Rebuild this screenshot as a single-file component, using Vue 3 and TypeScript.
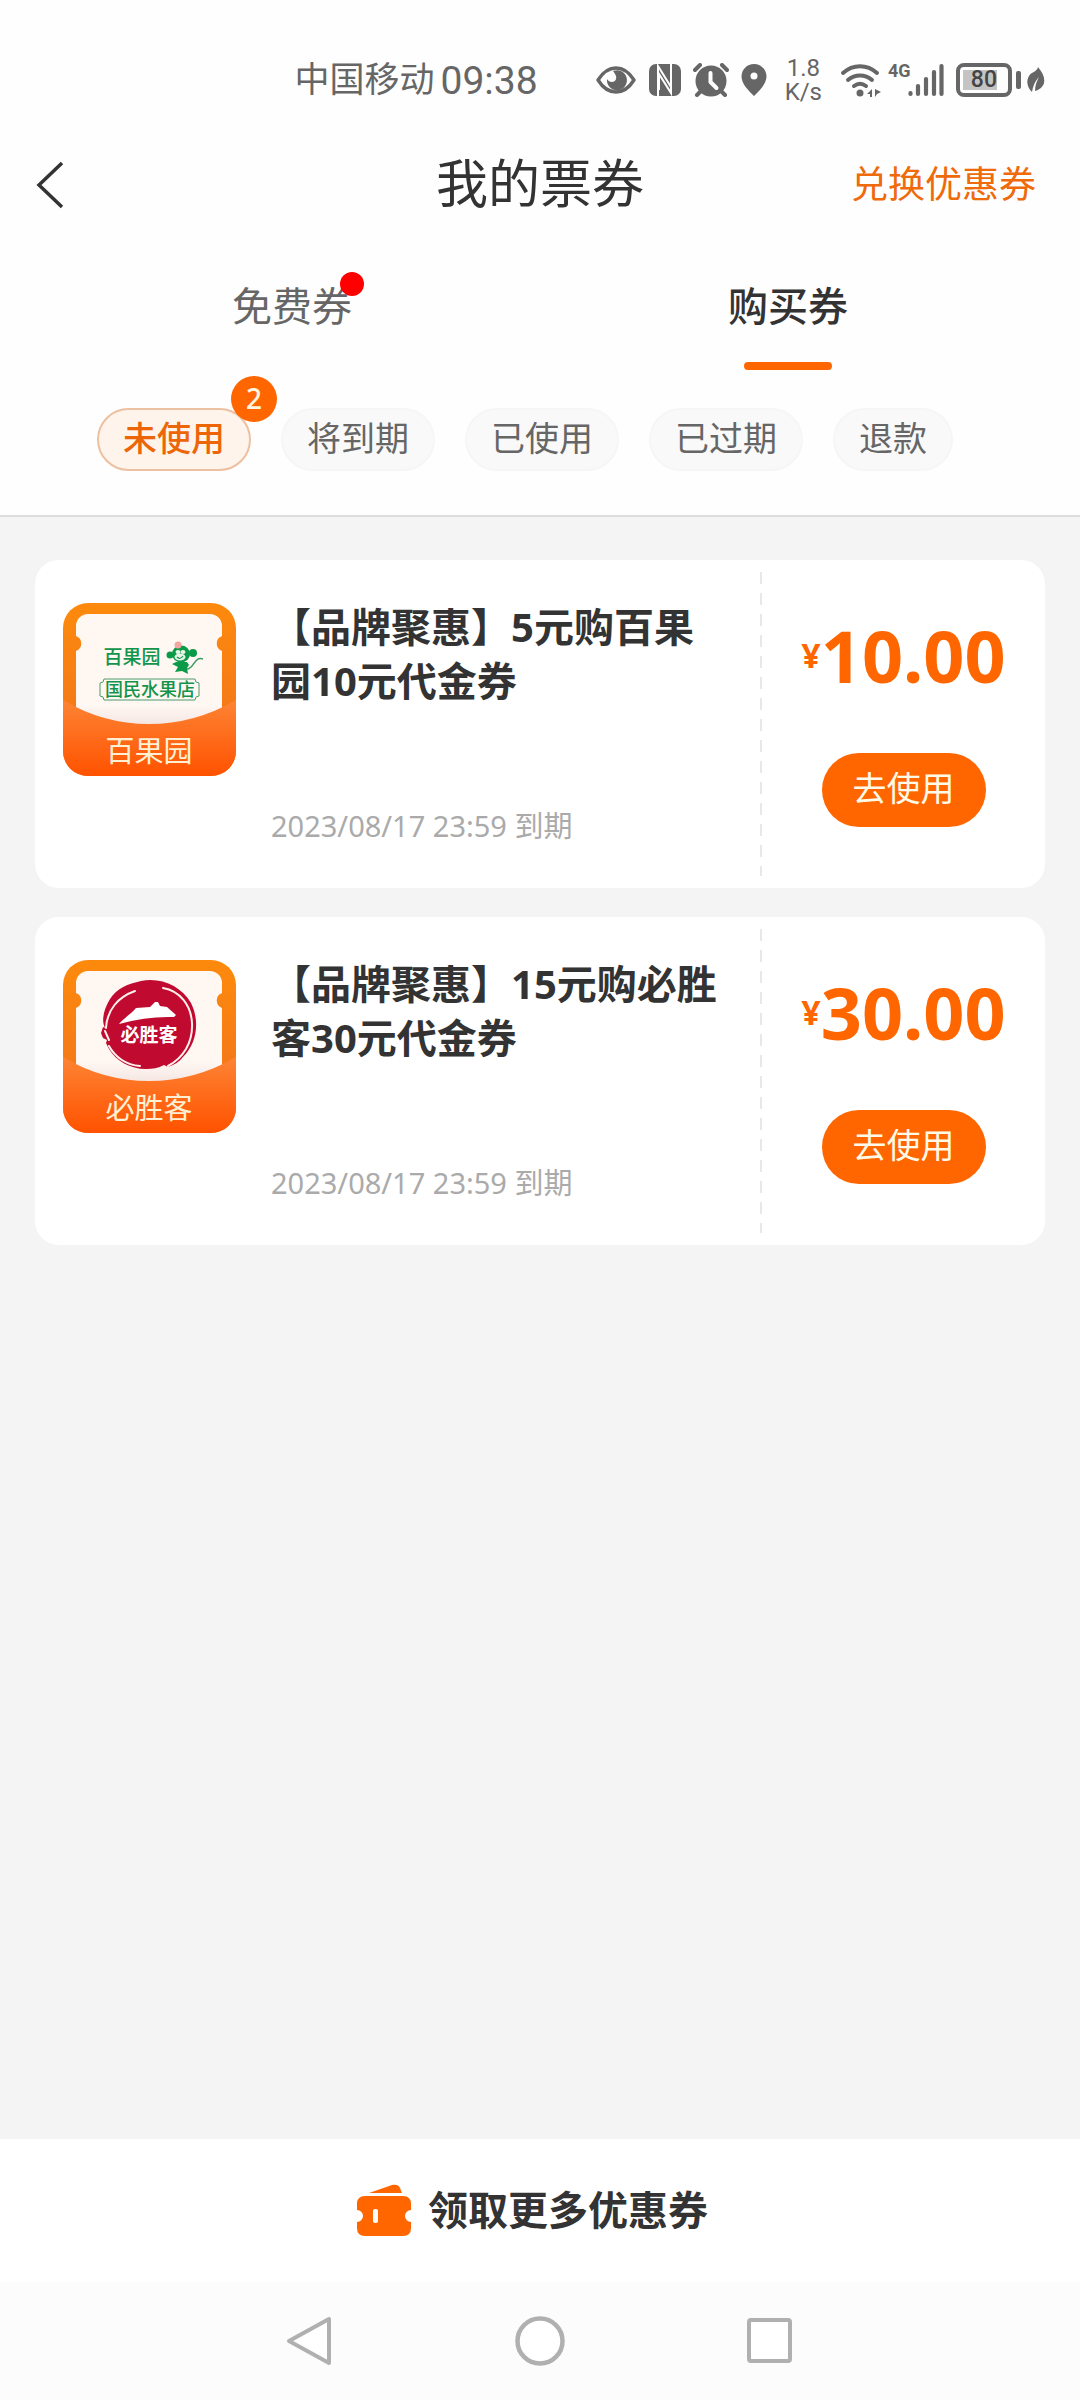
<script setup lang="ts">
import { ref } from 'vue'

interface Filter {
  label: string
  count?: number
}

interface Coupon {
  id: number
  brand: 'pagoda' | 'pizza'
  brandName: string
  title: string
  expires: string
  price: string
}

const tabs = [
  { label: '免费券', dot: true },
  { label: '购买券', dot: false },
]
const filters: Filter[] = [
  { label: '未使用', count: 2 },
  { label: '将到期' },
  { label: '已使用' },
  { label: '已过期' },
  { label: '退款' },
]
const coupons: Coupon[] = [
  {
    id: 1,
    brand: 'pagoda',
    brandName: '百果园',
    title: '【品牌聚惠】5元购百果园10元代金券',
    expires: '2023/08/17 23:59',
    price: '10.00',
  },
  {
    id: 2,
    brand: 'pizza',
    brandName: '必胜客',
    title: '【品牌聚惠】15元购必胜客30元代金券',
    expires: '2023/08/17 23:59',
    price: '30.00',
  },
]

const activeTab = ref(1)
const activeFilter = ref(0)
</script>

<template>
  <div class="screen">
    <div class="top">
      <div class="status">
        <div class="clock"><span class="carrier">中国移动</span><span>09:38</span></div>
        <div class="indicators">
          <svg width="42" height="34" viewBox="0 0 42 34">
            <path d="M3 17C8 9 14 5 21 5s13 4 18 12c-5 8-11 12-18 12S8 25 3 17z" fill="none" stroke="#666" stroke-width="3.4" stroke-linejoin="round" />
            <path d="M18 8a10 10 0 1 1-6 8c2 4 8 4 9 0 1-3-1-5-3-8z" fill="#666" />
          </svg>
          <svg width="32" height="34" viewBox="0 0 32 34">
            <rect x="0" y="1" width="32" height="32" rx="7" fill="#666" />
            <path d="M9 33V3l13 21V8M22 1v29L10 11v16" fill="none" stroke="#fff" stroke-width="2" />
          </svg>
          <svg width="36" height="34" viewBox="0 0 36 34">
            <circle cx="18" cy="18" r="15.500" fill="#666" />
            <path d="M2 7l5-5M34 7l-5-5M8 28l-4 4M28 28l4 4" stroke="#666" stroke-width="4" stroke-linecap="round" />
            <path d="M17.500 10v9l6 6" fill="none" stroke="#fff" stroke-width="4" stroke-linecap="round" stroke-linejoin="round" />
          </svg>
          <svg width="26" height="34" viewBox="0 0 26 34">
            <path d="M13 1C6 1 .5 6.500.5 13.500.5 21 8 28 13 33c5-5 12.500-12 12.500-19.500C25.500 6.500 20 1 13 1z" fill="#666" />
            <circle cx="13" cy="13" r="3.500" fill="#fff" />
          </svg>
          <div class="speed"><span>1.8</span><span>K/s</span></div>
          <svg width="42" height="34" viewBox="0 0 42 34">
            <g fill="none" stroke="#666" stroke-width="4" stroke-linecap="round">
              <path d="M3 10c10-9 24-9 34 0" />
              <path d="M8 17c7-6 17-6 24 0" />
              <path d="M14 23c4-3 8-3 12 0" />
            </g>
            <circle cx="20" cy="30" r="3.500" fill="#666" />
            <path d="M32 26v8h-2v-3h-3zM35 34v-8l6 3-4 2z" fill="#666" />
          </svg>
          <div class="signal">
            <span>4G</span>
            <svg width="36" height="34" viewBox="0 0 36 34">
              <path d="M2.500 30v1M10 23v8M18 16v15M26 9v22M33.500 3v28" stroke="#666" stroke-width="4.200" stroke-linecap="round" />
            </svg>
          </div>
          <div class="battery">
            <div class="cell"><span class="charge">80</span></div>
            <i></i>
          </div>
          <svg width="18" height="28" viewBox="0 0 18 28">
            <path d="M11 1c5 6 7 11 6 16-1 4-5 7-9 8 0-6 2-10 4-14-4 4-6 9-7 15-5-5-6-11-3-16 2-4 8-4 9-9z" fill="#666" />
          </svg>
        </div>
      </div>

      <header class="header">
        <button class="back" aria-label="返回">
          <svg width="28" height="48" viewBox="0 0 28 48">
            <path d="M26 2L3 24l23 22" fill="none" stroke="#333" stroke-width="3.500" />
          </svg>
        </button>
        <h1>我的票券</h1>
        <a class="redeem" href="#">兑换优惠券</a>
      </header>

      <nav class="tabs">
        <button
          v-for="(tab, i) in tabs"
          :key="tab.label"
          class="tab"
          :class="{ active: activeTab === i }"
          @click="activeTab = i"
        >
          <span class="tab-label">{{ tab.label }}<i v-if="tab.dot" class="dot"></i></span>
          <span class="bar"></span>
        </button>
      </nav>

      <div class="filters">
        <button
          v-for="(f, i) in filters"
          :key="f.label"
          class="chip"
          :class="{ active: activeFilter === i }"
          @click="activeFilter = i"
        >
          {{ f.label }}
          <span v-if="f.count" class="badge">{{ f.count }}</span>
        </button>
      </div>
    </div>

    <main class="list">
      <article v-for="c in coupons" :key="c.id" class="card">
        <svg class="art" width="173" height="173" viewBox="0 0 173 173">
          <defs>
            <linearGradient :id="`back-${c.id}`" x1="0" y1="0" x2="0" y2="1">
              <stop offset="0" stop-color="#fd8a0c" />
              <stop offset="0.600" stop-color="#f57a18" />
            </linearGradient>
            <linearGradient :id="`pocket-${c.id}`" x1="0" y1="0" x2="0" y2="1">
              <stop offset="0" stop-color="#fd8434" />
              <stop offset="1" stop-color="#ff5200" />
            </linearGradient>
            <linearGradient :id="`paper-${c.id}`" x1="0" y1="0" x2="0" y2="1">
              <stop offset="0.800" stop-color="#fff7f2" />
              <stop offset="1" stop-color="#f3e4e0" />
            </linearGradient>
            <clipPath :id="`clip-${c.id}`"><rect width="173" height="173" rx="25" /></clipPath>
          </defs>
          <g :clip-path="`url(#clip-${c.id})`">
            <rect width="173" height="173" :fill="`url(#back-${c.id})`" />
            <path d="M25 11H147a12 12 0 0 1 12 12V33a8 8 0 0 0 0 15V125H13V48a8 8 0 0 0 0-15V23a12 12 0 0 1 12-12z" :fill="`url(#paper-${c.id})`" />
            <path d="M0 97Q40 121 86 121T173 97V173H0z" :fill="`url(#pocket-${c.id})`" />
          </g>
          <g v-if="c.brand === 'pagoda'">
            <text x="69" y="61" class="green" font-size="19">百果园</text>
            <text x="87" y="93" class="green" font-size="18">国民水果店</text>
            <path d="M41 76H132q0 4 4 4V93q-4 0-4 4H41q0-4-4-4V80q4 0 4-4z" fill="none" stroke="#4b9c6c" stroke-width="1" />
            <g fill="#0a9a48">
              <circle cx="107" cy="52" r="3.500" />
              <circle cx="130" cy="50" r="4" />
              <ellipse cx="118" cy="51" rx="9" ry="8.500" />
              <path d="M113 59h11l2 3-2 3 1 6-4-2-2-1-7 1 3-5-6-3z" />
            </g>
            <path d="M124 66c7 0 7-13 16-10" fill="none" stroke="#3f9b62" stroke-width="1.500" />
            <ellipse cx="117" cy="54" rx="5.500" ry="3.500" fill="#e9f5e6" />
            <ellipse cx="115" cy="49" rx="2.500" ry="2" fill="#e9f5e6" />
            <ellipse cx="120" cy="49" rx="2.500" ry="2" fill="#e9f5e6" />
            <path d="M114 54q3 3 6-1" fill="none" stroke="#0a9a48" stroke-width="1.200" />
            <circle cx="115" cy="42" r="3.500" fill="#f1a6a2" />
          </g>
          <g v-else>
            <path d="M78 21C98 17 118 26 128 43c9 18 6 40-8 54-4 5-9 8-15 10l-4-2c-6 3-11 4-18 4-16 0-30-8-37-20l-3-6 1-3-4-2-2-5 2-6 2 1c-4-8-1-19 5-29 7-11 18-15 31-18z" fill="#c00a30" />
            <g fill="none" stroke="#fff0ec" stroke-width="2" stroke-linecap="round">
              <path d="M72 31C55 37 44 50 43 68" />
              <path d="M42 71l4 9M46 86c6 11 17 19 31 20" />
              <path d="M100 28c17 3 28 17 29 35 1 20-9 35-24 43" />
            </g>
            <path d="M56 64C61 58 68 54 73 48L87 47L92 42H95L97 46L104 47L113 55L111 57Q84 56 56 64z" fill="#fff" />
            <text x="86" y="82" class="hat-name" font-size="19">必胜客</text>
          </g>
          <text x="86" y="159" class="brand" font-size="29">{{ c.brandName }}</text>
        </svg>
        <div class="info">
          <h2>{{ c.title }}</h2>
          <p>{{ c.expires }} 到期</p>
        </div>
        <div class="split"></div>
        <div class="buy">
          <div class="price"><span class="yen">¥</span><span>{{ c.price }}</span></div>
          <button class="use">去使用</button>
        </div>
      </article>
    </main>

    <a class="more" href="#">
      <svg width="56" height="54" viewBox="0 0 56 54">
        <path d="M13 9L36 1c4-1 7 0 8 3l2 5z" fill="#f60" />
        <path d="M9 12H47q8 0 8 8v6a6 6 0 0 0 0 12v6q0 8-8 8H9q-8 0-8-8v-6a6 6 0 0 0 0-12v-6q0-8 8-8z" fill="#f60" />
        <rect x="17" y="25" width="5" height="14" rx="2" fill="#fff" />
      </svg>
      <span>领取更多优惠券</span>
    </a>

    <nav class="system">
      <button aria-label="后退">
        <svg width="52" height="52" viewBox="0 0 52 52"><path d="M5 26L45 4V48z" fill="#fff" stroke="#b0b0b0" stroke-width="4" stroke-linejoin="round" /></svg>
      </button>
      <button aria-label="主屏幕">
        <svg width="52" height="52" viewBox="0 0 52 52"><circle cx="26" cy="26" r="22.500" fill="#fff" stroke="#b0b0b0" stroke-width="4.500" /></svg>
      </button>
      <button aria-label="最近任务">
        <svg width="52" height="52" viewBox="0 0 52 52"><rect x="5" y="5" width="41" height="41" rx="2" fill="#fff" stroke="#b0b0b0" stroke-width="4" /></svg>
      </button>
    </nav>
  </div>
</template>

<style>
body {
  margin: 0;
}
</style>

<style scoped>
.screen {
  min-height: 100vh;
  display: flex;
  flex-direction: column;
  background: #f4f4f4;
  color: #333;
  font-family: "Noto Sans", "Noto Sans CJK SC", sans-serif;
}
.screen * {
  box-sizing: border-box;
}
button {
  margin: 0;
  padding: 0;
  border: 0;
  background: none;
  color: inherit;
  font: inherit;
  cursor: pointer;
}
a {
  text-decoration: none;
}
svg {
  display: block;
  flex: none;
}
.top {
  background: #fefefe;
  border-bottom: 2px solid #ddd;
}

.status {
  display: flex;
  justify-content: flex-end;
  align-items: center;
  gap: 57px;
  height: 120px;
  padding: 40px 35px 0 0;
  color: #666;
  font-family: Roboto, "Noto Sans CJK SC", sans-serif;
}
.clock {
  display: flex;
  align-items: center;
  gap: 6px;
  padding-top: 2px;
  font-size: 39px;
  font-weight: 500;
  line-height: 48px;
}
.clock span {
  font-weight: 400;
}
.carrier {
  font-size: 35px;
}
.indicators {
  display: flex;
  align-items: center;
  gap: 12px;
}
.speed {
  display: flex;
  flex-direction: column;
  align-items: center;
  margin: 0 6px;
  font-size: 24px;
  line-height: 24px;
}
.signal {
  display: flex;
  align-items: flex-start;
  margin-left: -6px;
  font-size: 18px;
  font-weight: 700;
  line-height: 16px;
}
.signal span {
  width: 20px;
}
.battery {
  display: flex;
  align-items: center;
  gap: 4px;
  margin-right: -6px;
}
.cell {
  width: 56px;
  height: 34px;
  padding: 3px;
  border: 4px solid #666;
  border-radius: 8px;
}
.charge {
  display: block;
  width: 34px;
  background: #c4c4c4;
  color: #444;
  font-size: 23px;
  font-weight: 500;
  line-height: 20px;
  text-align: right;
}
.battery i {
  width: 5px;
  height: 18px;
  border-radius: 2px;
  background: #666;
}

.header {
  display: grid;
  grid-template-columns: 1fr auto 1fr;
  align-items: center;
  height: 128px;
  padding: 0 44px 0 36px;
}
.back {
  justify-self: start;
  padding-top: 2px;
}
h1 {
  margin: 0 0 2px 8px;
  font-size: 52px;
  font-weight: 400;
  line-height: 72px;
}
.redeem {
  justify-self: end;
  color: #ee6a0a;
  font-size: 37px;
  line-height: 52px;
}

.tabs {
  display: flex;
  padding: 28px 44px 0;
}
.tab {
  flex: 1;
  display: flex;
  flex-direction: column;
  align-items: center;
  gap: 26px;
  color: #666;
  font-size: 40px;
  line-height: 60px;
}
.tab.active {
  color: #333;
  font-weight: 500;
}
.tab-label {
  position: relative;
}
.dot {
  position: absolute;
  top: -4px;
  right: -12px;
  width: 24px;
  height: 24px;
  border-radius: 50%;
  background: #f00;
}
.bar {
  width: 88px;
  height: 8px;
  border-radius: 4px;
}
.active .bar {
  background: #f60;
}

.filters {
  display: flex;
  gap: 28px;
  padding: 38px 97px 44px;
}
.chip {
  position: relative;
  height: 63px;
  padding: 0 24px 4px;
  border: 2px solid #f6f6f6;
  border-radius: 32px;
  background: #f9f9f9;
  color: #666;
  font-size: 34px;
  line-height: 54px;
  white-space: nowrap;
}
.chip + .chip {
  margin-left: 2px;
}
.chip.active {
  border-color: #ecc0a0;
  background: #fff4ec;
  color: #ec6608;
  font-weight: 500;
}
.badge {
  position: absolute;
  top: -34px;
  right: -28px;
  width: 46px;
  height: 46px;
  border-radius: 50%;
  background: #f60;
  color: #fff6e0;
  font-size: 28px;
  line-height: 44px;
  text-align: center;
}

.list {
  flex: 1;
  display: flex;
  flex-direction: column;
  gap: 29px;
  padding: 43px 35px;
}
.card {
  display: flex;
  min-height: 328px;
  border-radius: 24px;
  background: #fff;
}
.art {
  margin: 43px 35px 0 28px;
}
.info {
  flex: 1;
  display: flex;
  flex-direction: column;
  justify-content: space-between;
  padding: 40px 36px 42px 0;
}
h2 {
  margin: 0;
  font-size: 40px;
  font-weight: 700;
  line-height: 54px;
}
p {
  margin: 0;
  color: #aaa;
  font-size: 29px;
  line-height: 40px;
}
.split {
  width: 2px;
  margin: 12px 0;
  background: repeating-linear-gradient(#e8e8e8 0 12px, transparent 12px 21px);
}
.buy {
  width: 283px;
  display: flex;
  flex-direction: column;
  align-items: center;
  gap: 50px;
  padding-top: 47px;
}
.price {
  display: flex;
  align-items: center;
  color: #f60;
  font-size: 72px;
  font-weight: 700;
  line-height: 96px;
}
.yen {
  font-size: 34px;
}
.use {
  width: 164px;
  height: 74px;
  padding-bottom: 8px;
  border-radius: 37px;
  background: #f60;
  color: #fffae8;
  font-size: 34px;
}

.green {
  fill: #12944a;
  font-weight: 500;
  text-anchor: middle;
}
.hat-name {
  fill: #fff;
  font-weight: 700;
  text-anchor: middle;
}
.brand {
  fill: #fff0d4;
  text-anchor: middle;
}

.more {
  display: flex;
  justify-content: center;
  align-items: center;
  gap: 16px;
  height: 143px;
  padding-right: 16px;
  background: #fff;
  color: #333;
  font-size: 40px;
  font-weight: 700;
}
.more span {
  padding-bottom: 6px;
}
.system {
  display: flex;
  justify-content: center;
  height: 118px;
  background: #fcfcfc;
}
.system button {
  width: 230px;
  display: flex;
  justify-content: center;
  align-items: center;
}
</style>
